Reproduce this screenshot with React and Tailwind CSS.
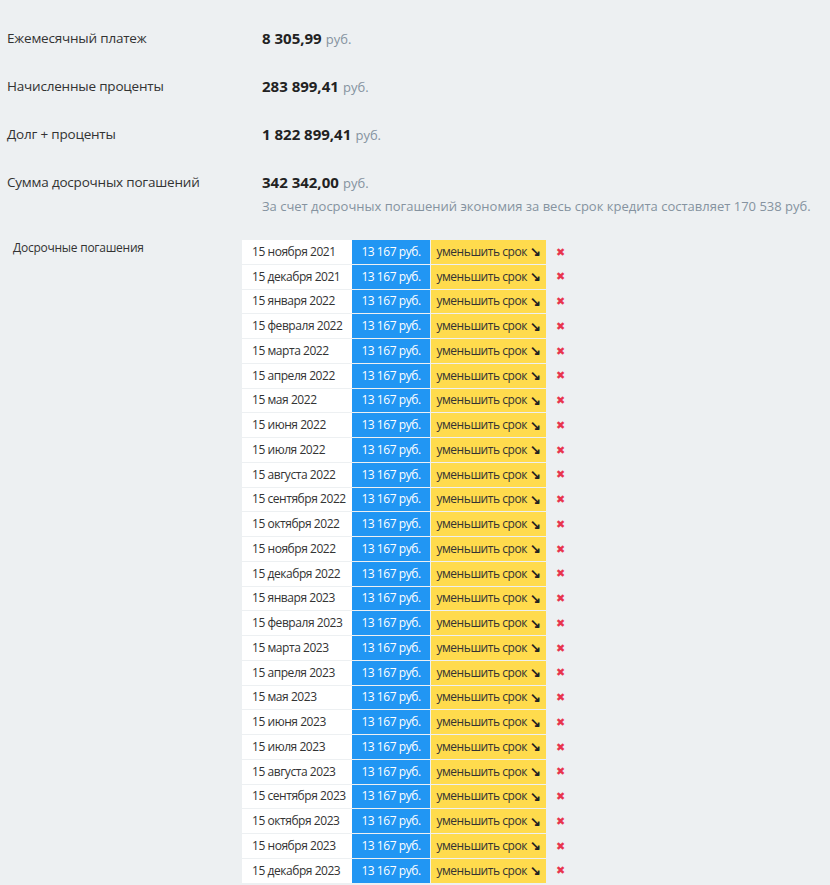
const summary = [
  { label: 'Ежемесячный платеж', value: '8 305,99' },
  { label: 'Начисленные проценты', value: '283 899,41' },
  { label: 'Долг + проценты', value: '1 822 899,41' },
  {
    label: 'Сумма досрочных погашений',
    value: '342 342,00',
    note: 'За счет досрочных погашений экономия за весь срок кредита составляет 170 538 руб.',
  },
]

const months = [
  'января', 'февраля', 'марта', 'апреля', 'мая', 'июня',
  'июля', 'августа', 'сентября', 'октября', 'ноября', 'декабря',
]

const payments = []
for (let i = 10; i < 36; i++) {
  payments.push(`15 ${months[i % 12]} ${2021 + Math.floor(i / 12)}`)
}

const App = () => {
  return (
    <div className="min-h-[885px] bg-[#edf0f2] text-[#333] font-['Open_Sans',sans-serif]">
      <div className="pt-[28px] pl-[7px]">
        {summary.map((row) => (
          <div key={row.label} className="grid grid-cols-[255px_1fr] h-[48px] items-start">
            <div className="text-[13.5px] tracking-[-0.2px] leading-[20px] text-[#333]">{row.label}</div>
            <div>
              <div className="leading-[20px]">
                <span className="text-[15px] font-bold text-[#222]">{row.value}</span>{' '}
                <span className="text-[13px] text-[#8593a0]">руб.</span>
              </div>
              {row.note && (
                <div className="mt-[4px] text-[13px] leading-[18px] text-[#8593a0] whitespace-nowrap">{row.note}</div>
              )}
            </div>
          </div>
        ))}
      </div>

      <div className="flex mt-[19px]">
        <div className="w-[242px] pl-[13px] pt-[1px] text-[12px] tracking-[-0.25px] leading-[16px] text-[#333]">Досрочные погашения</div>
        <div className="flex flex-col gap-[1px] pt-[1px]">
          {payments.map((date) => (
            <div key={date} className="flex h-[23.75px] items-stretch text-[12px] tracking-[-0.45px] whitespace-nowrap">
              <div className="w-[110px] bg-white pl-[10px] flex items-center text-[#333]">{date}</div>
              <div className="w-[78px] bg-[#2196f3] text-white flex items-center justify-center">13 167 руб.</div>
              <div className="w-[115px] ml-[1px] bg-[#ffdb4d] text-[#333] flex items-center justify-center gap-[3px]">
                уменьшить срок <span className="font-bold text-[13px] leading-none text-[#222]">↘</span>
              </div>
              <div className="w-[28px] flex items-center justify-center text-[#e8344e] text-[11px]">✖</div>
            </div>
          ))}
        </div>
      </div>
    </div>
  )
}

export default App
